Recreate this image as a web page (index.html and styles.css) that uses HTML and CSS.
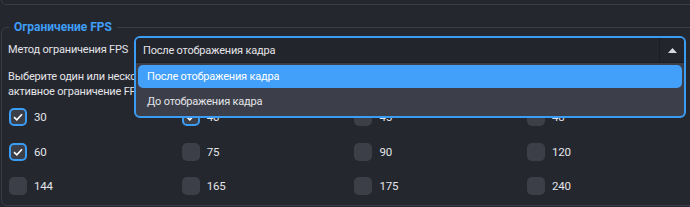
FILE: index.html
```html
<!DOCTYPE html>
<html lang="ru">

<head>
    <meta charset="UTF-8">
    <meta name="viewport" content="width=device-width, initial-scale=1.0">
    <title>Ограничение FPS</title>
    <link rel="stylesheet" href="styles.css">
</head>

<body>
    <div class="prev-panel"></div>

    <fieldset class="group">
        <legend>Ограничение FPS</legend>

        <div class="row">
            <label class="row-label">Метод ограничения FPS</label>
            <div class="select">
                <div class="select-box">
                    <div class="select-head">
                        <span class="select-value">После отображения кадра</span>
                        <span class="select-arrow">
                            <svg width="9" height="5" viewBox="0 0 9 5"><path d="M0 5 L4.5 0 L9 5 Z" fill="#d8d9de"/></svg>
                        </span>
                    </div>
                    <div class="select-list">
                        <div class="option selected">После отображения кадра</div>
                        <div class="option">До отображения кадра</div>
                    </div>
                </div>
            </div>
        </div>

        <div class="hint">
            <p>Выберите один или несколько значений для переключения.</p>
            <p>активное ограничение FPS будет первым в списке.</p>
        </div>

        <div class="checks">
            <label class="check on"><span class="box"></span>30</label>
            <label class="check on"><span class="box"></span>40</label>
            <label class="check"><span class="box"></span>45</label>
            <label class="check"><span class="box"></span>48</label>
            <label class="check on"><span class="box"></span>60</label>
            <label class="check"><span class="box"></span>75</label>
            <label class="check"><span class="box"></span>90</label>
            <label class="check"><span class="box"></span>120</label>
            <label class="check"><span class="box"></span>144</label>
            <label class="check"><span class="box"></span>165</label>
            <label class="check"><span class="box"></span>175</label>
            <label class="check"><span class="box"></span>240</label>
        </div>
    </fieldset>
</body>

</html>
```

FILE: styles.css
```css
* {
    margin: 0;
    padding: 0;
    box-sizing: border-box;
}

body {
    width: 690px;
    height: 207px;
    overflow: hidden;
    background-color: #25272f;
    color: #e3e4e8;
    font-family: Roboto, "Noto Sans", sans-serif;
    font-size: 11px;
    letter-spacing: -0.2px;
}

.prev-panel {
    height: 5px;
    margin: 0 -10px 0 1px;
    border: 1px solid #3a3d47;
    border-top: none;
    border-radius: 0 0 6px 6px;
}

.group {
    width: 692px;
    margin: 15px 0 0 1px;
    height: 186px;
    border: 1px solid #3a3d47;
    border-radius: 6px;
    padding: 2px 0 0 6px;
}

.group legend {
    margin-left: 1px;
    padding: 0 5px;
    color: #3f9ef7;
    font-weight: 700;
    font-size: 12px;
    letter-spacing: 0;
    line-height: 14px;
}

.row {
    display: flex;
    align-items: center;
    height: 26px;
}

.row-label {
    width: 126px;
    white-space: nowrap;
}

.select {
    position: relative;
    width: 552px;
    height: 26px;
}

.select-box {
    position: absolute;
    top: 0;
    left: 0;
    right: 0;
    border: 2px solid #3b9cf3;
    border-radius: 6px;
    background-color: #3c3f4a;
    overflow: hidden;
    z-index: 2;
}

.select-head {
    display: flex;
    align-items: center;
    height: 25px;
    background-color: #23252c;
    border-bottom: 1px solid #1c1d23;
}

.select-value {
    flex: 1;
    padding-left: 7px;
}

.select-arrow {
    width: 25px;
    height: 100%;
    display: flex;
    align-items: center;
    justify-content: center;
    border-left: 1px solid #1c1d23;
}

.select-list {
    padding: 2px 2px 1px;
}

.option {
    height: 23px;
    line-height: 23px;
    padding-left: 9px;
    border-radius: 5px;
    margin-bottom: 2px;
}

.option.selected {
    background-color: #42a0fb;
    color: #fff;
}

.hint {
    margin-top: 7px;
    width: 127px;
    line-height: 15px;
    white-space: nowrap;
    overflow: hidden;
}

.checks {
    display: grid;
    grid-template-columns: repeat(4, 172.7px);
    row-gap: 16.5px;
    margin-top: 9px;
    margin-left: 1px;
}

.check {
    display: flex;
    align-items: center;
    gap: 7px;
    height: 18px;
    font-size: 11.5px;
}

.check .box {
    width: 18px;
    height: 18px;
    border-radius: 5px;
    background-color: #3c3e48;
}

.check.on .box {
    border: 2px solid #3b9cf3;
    background: #3c3e48 url("data:image/svg+xml,%3Csvg xmlns='http://www.w3.org/2000/svg' width='10' height='8' viewBox='0 0 10 8'%3E%3Cpath d='M1 4.2 L3.8 6.8 L9 1.2' fill='none' stroke='white' stroke-width='1.6'/%3E%3C/svg%3E") center no-repeat;
}
```
